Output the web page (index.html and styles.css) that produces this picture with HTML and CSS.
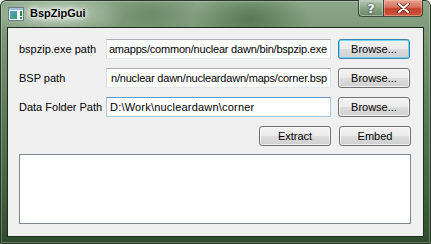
FILE: index.html
```html
<!DOCTYPE html>
<html>
<head>
<meta charset="utf-8">
<link rel="stylesheet" href="styles.css">
</head>
<body>
<div class="window">
  <div class="titlebar">
    <svg class="app-icon" width="16" height="16" viewBox="0 0 16 16">
      <defs>
        <linearGradient id="ig" x1="0" y1="0" x2="1" y2="1">
          <stop offset="0" stop-color="#5aa0c8"/>
          <stop offset="1" stop-color="#3a9a6a"/>
        </linearGradient>
      </defs>
      <rect x="0.5" y="1.5" width="15" height="13" fill="#f4f6f8" stroke="#6b7b8b"/>
      <rect x="1" y="2" width="14" height="2" fill="#9cc0e0"/>
      <rect x="2" y="5" width="7" height="8" fill="url(#ig)"/>
      <rect x="12" y="5" width="2" height="5" fill="#2a8a3a"/>
      <rect x="12" y="11" width="2" height="2" fill="#2a8a3a"/>
    </svg>
    <span class="title">BspZipGui</span>
    <div class="caption-buttons">
      <div class="cap help">?</div>
      <div class="cap close">
        <svg width="13" height="10" viewBox="0 0 13 10">
          <path d="M2 1 L11 9 M11 1 L2 9" stroke="#5a1a10" stroke-width="3.4" stroke-linecap="round"/>
          <path d="M2 1 L11 9 M11 1 L2 9" stroke="#ffffff" stroke-width="2" stroke-linecap="round"/>
        </svg>
      </div>
    </div>
  </div>
  <div class="client">
    <div class="form">
      <label class="lbl">bspzip.exe path</label>
      <div class="field scrolled"><span>amapps/common/nuclear dawn/bin/bspzip.exe</span></div>
      <button class="btn default">Browse...</button>

      <label class="lbl">BSP path</label>
      <div class="field scrolled"><span>n/nuclear dawn/nucleardawn/maps/corner.bsp</span></div>
      <button class="btn">Browse...</button>

      <label class="lbl">Data Folder Path</label>
      <div class="field focused"><span>D:\Work\nucleardawn\corner</span></div>
      <button class="btn">Browse...</button>
    </div>
    <div class="actions">
      <button class="btn">Extract</button>
      <button class="btn">Embed</button>
    </div>
    <div class="output"></div>
  </div>
</div>
</body>
</html>
```

FILE: styles.css
```css
html, body {
  margin: 0;
  padding: 0;
  background: #ffffff;
}

.window {
  width: 431px;
  height: 244px;
  box-sizing: border-box;
  border: 1px solid #283828;
  border-radius: 6px 6px 0 0;
  display: flex;
  flex-direction: column;
  padding: 0 6px 6px 6px;
  background:
    radial-gradient(ellipse 60px 30px at 250px 18px, rgba(50,90,45,0.55), rgba(50,90,45,0) 100%),
    radial-gradient(ellipse 50px 25px at 150px 12px, rgba(60,95,55,0.35), rgba(60,95,55,0) 100%),
    radial-gradient(ellipse 70px 22px at 55px 14px, rgba(230,240,228,0.55), rgba(230,240,228,0) 100%),
    linear-gradient(to bottom, #8ca689 0px, #7f9b7b 27px, #5f7f5b 100px, #3e5e3a 200px, #2e4a2c 244px);
  box-shadow: inset 0 0 0 1px rgba(255,255,255,0.25);
  font-family: "Liberation Sans", Arial, sans-serif;
  font-size: 11px;
  color: #000;
}

.titlebar {
  height: 26px;
  display: flex;
  align-items: flex-start;
  flex-shrink: 0;
}

.app-icon {
  margin: 5px 0 0 1px;
  flex-shrink: 0;
}

.title {
  margin: 6px 0 0 6px;
  font-weight: bold;
  font-size: 11px;
  line-height: 13px;
  color: #000;
  text-shadow: 0 0 4px #fff, 0 0 6px #fff, 0 0 8px rgba(255,255,255,0.8);
}

.caption-buttons {
  margin-left: auto;
  margin-right: 1px;
  display: flex;
  margin-top: -1px;
}

.cap {
  height: 17px;
  box-sizing: border-box;
  display: flex;
  align-items: center;
  justify-content: center;
  border: 1px solid rgba(40,60,40,0.85);
  border-top: none;
}

.help {
  width: 25px;
  border-radius: 0 0 0 4px;
  border-right: none;
  background: linear-gradient(to bottom, rgba(200,215,198,0.75), rgba(140,165,136,0.7) 50%, rgba(95,125,90,0.75));
  box-shadow: inset 0 0 0 1px rgba(255,255,255,0.35);
  color: #fff;
  font-weight: bold;
  font-size: 13px;
  font-family: "DejaVu Sans", sans-serif;
  text-shadow: 0 0 1px #333, 0 0 2px #333;
}

.close {
  width: 40px;
  border-radius: 0 0 4px 0;
  background: linear-gradient(to bottom, #e3a593 0%, #d8705a 45%, #c4402a 55%, #c95a40 100%);
  box-shadow: inset 0 0 0 1px rgba(255,200,180,0.45);
}

.client {
  flex: 1;
  background: #f0f0f0;
  border: 1px solid #1e2a1e;
  padding: 11px 12px 11px 11px;
  display: flex;
  flex-direction: column;
}

.form {
  display: grid;
  grid-template-columns: 80px 225px 72px;
  grid-auto-rows: 20px;
  column-gap: 7px;
  row-gap: 9px;
  align-items: center;
}

.lbl {
  white-space: nowrap;
  line-height: 13px;
}

.field {
  height: 20px;
  box-sizing: border-box;
  background: #fff;
  border: 1px solid #dbdfe6;
  border-top-color: #abadb3;
  border-bottom-color: #e3e9ef;
  display: flex;
  align-items: center;
  overflow: hidden;
  white-space: nowrap;
  padding: 0 3px;
}

.field.scrolled {
  justify-content: flex-end;
  padding: 0 3px 0 1px;
  letter-spacing: -0.2px;
}

.field.focused {
  border-color: #a4c9e3;
  border-top-color: #5a9ad0;
  letter-spacing: 0.2px;
}

.btn {
  height: 20px;
  width: 72px;
  box-sizing: border-box;
  margin: 0;
  padding: 0;
  border: 1px solid #707070;
  border-radius: 3px;
  background: linear-gradient(to bottom, #f2f2f2 0%, #ebebeb 50%, #dddddd 50%, #cfcfcf 100%);
  box-shadow: inset 0 0 0 1px rgba(255,255,255,0.7);
  font-family: "Liberation Sans", Arial, sans-serif;
  font-size: 11px;
  color: #000;
  line-height: 13px;
}

.btn.default {
  border-color: #3c7fb1;
  box-shadow: inset 0 0 0 1px #74d4f6;
}

.actions {
  display: flex;
  justify-content: flex-end;
  gap: 8px;
  margin-top: 9px;
}

.output {
  margin-top: 8px;
  height: 70px;
  box-sizing: border-box;
  background: #fff;
  border: 1px solid #828790;
}
```
